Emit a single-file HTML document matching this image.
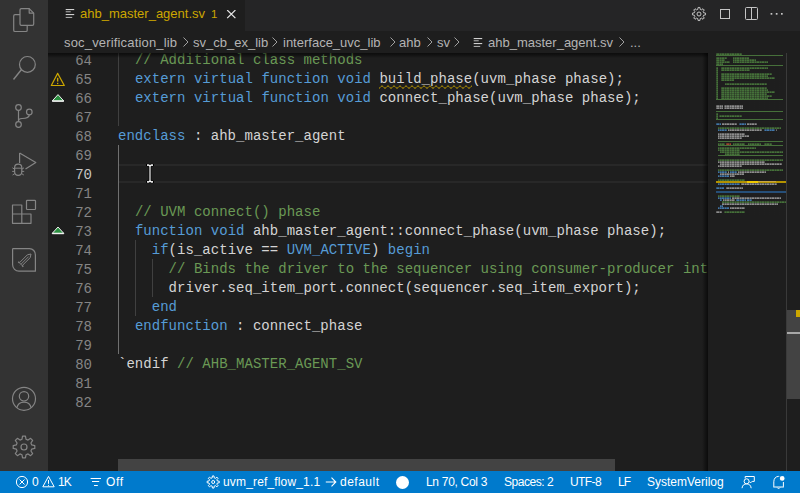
<!DOCTYPE html>
<html><head><meta charset="utf-8">
<style>
*{margin:0;padding:0;box-sizing:border-box}
html,body{width:800px;height:493px;overflow:hidden;background:#1e1e1e}
body{position:relative;font-family:"Liberation Sans",sans-serif}
.abs{position:absolute}
#act{left:0;top:0;width:48px;height:471px;background:#333333}
#tabs{left:48px;top:0;width:752px;height:31px;background:#252526}
#tab{left:48px;top:0;width:197px;height:31px;background:#1e1e1e}
#crumbs{left:48px;top:31px;width:752px;height:22px;background:#1e1e1e}
#editor{left:48px;top:53px;width:660px;height:418px;background:#1e1e1e;overflow:hidden}
#status{left:0;top:471px;width:800px;height:22px;background:#007acc;color:#fff;font-size:12px}
.ui{font-family:"Liberation Sans",sans-serif;white-space:pre}
.code{font-family:"Liberation Mono",monospace;font-size:14px;white-space:pre;line-height:19px;color:#d4d4d4;letter-spacing:0.03px}
.ln{font-family:"Liberation Mono",monospace;font-size:14px;line-height:19px;color:#858585;text-align:right;width:44px;white-space:pre}
.act{color:#c6c6c6}.k{color:#569cd6}.c{color:#6a9955}
.cr{color:#b4b4b4;font-size:13px;top:35px;line-height:16px}
.st{top:474px;line-height:16px;font-size:12px;color:#fff}
</style></head><body>
<div id="act" class="abs"></div>
<svg class="abs" style="left:0;top:0" width="48" height="471" viewBox="0 0 48 471">
<g fill="none" stroke="#858585" stroke-width="1.2" stroke-linejoin="round">
<!-- explorer -->
<path d="M20 14.6 H15 Q13.7 14.6 13.7 15.9 V30.2 Q13.7 31.5 15 31.5 H26 Q27.2 31.5 27.2 30.2 V25.4"/>
<path d="M21.3 8.6 H29.2 L33.7 13.1 V24 Q33.7 25.3 32.4 25.3 H21.3 Q20 25.3 20 24 V9.9 Q20 8.6 21.3 8.6 Z"/>
<path d="M29.2 8.6 V13.1 H33.7"/>
<!-- search -->
<circle cx="27.4" cy="64.4" r="7.9"/>
<path d="M21.5 69.5 L13.5 79.5" stroke-width="1.4"/>
<!-- source control -->
<circle cx="18.5" cy="107.5" r="2.8"/>
<circle cx="18.5" cy="124.5" r="2.8"/>
<circle cx="29.3" cy="112" r="2.8"/>
<path d="M18.5 110.3 V121.7"/>
<path d="M29.3 114.8 C29.3 118 26 118.5 22 118.5 C19.5 118.5 18.5 119.5 18.5 121"/>
<!-- run & debug -->
<path d="M19.6 153 L35.8 162.5 L25.5 169"/>
<path d="M19.6 153 V163"/>
<path d="M14.6 167.8 C14.6 165.5 16.2 164.2 18.2 164.2 C20.2 164.2 21.8 165.5 21.8 167.8 V171.6 C21.8 173.9 20.2 175.4 18.2 175.4 C16.2 175.4 14.6 173.9 14.6 171.6 Z"/>
<path d="M14.6 168.2 H21.8 M14.6 169.2 L12.4 167.8 M14.6 171.4 H12.2 M14.8 173.6 L12.6 175 M21.8 169.2 L24 167.8 M21.8 171.4 H24.2 M21.6 173.6 L23.8 175" stroke-width="1"/>
<!-- extensions -->
<path d="M12.5 205 H21.8 V214 H31 V223.3 H12.5 Z M12.5 214 H21.8 V223.3"/>
<rect x="26.5" y="200.3" width="9" height="9.2" rx="0.8"/>
<!-- other -->
<path d="M13.2 248.6 H29.5 C33 248.6 35.4 251.5 35.4 255 V271.2 H19 C15.5 271.2 12.6 268.3 12.6 264.8 V249.2 C12.6 248.9 12.9 248.6 13.2 248.6 Z"/>
<path d="M31 254 L30.2 257.6 L22.2 265.6 L19.4 262.8 L27.4 254.8 Z" stroke-width="1"/>
<path d="M21 264.2 L28.6 256.6" stroke-width="0.9"/>
<path d="M19.4 262.8 L18.3 261.7 M22.2 265.6 L23.3 266.7 M19.5 265.5 L19.6 265.6" stroke-width="1.4"/>
<!-- account -->
<circle cx="24" cy="398.8" r="11.5"/>
<circle cx="24" cy="396.3" r="4.7"/>
<path d="M16.8 407.8 C17.8 403.8 20.6 402.2 24 402.2 C27.4 402.2 30.2 403.8 31.2 407.8"/>
<!-- gear -->
<path d="M21.95 439.27 L22.55 436.20 L25.45 436.20 L26.05 439.27 L28.02 440.08 L30.61 438.34 L32.66 440.39 L30.92 442.98 L31.73 444.95 L34.80 445.55 L34.80 448.45 L31.73 449.05 L30.92 451.02 L32.66 453.61 L30.61 455.66 L28.02 453.92 L26.05 454.73 L25.45 457.80 L22.55 457.80 L21.95 454.73 L19.98 453.92 L17.39 455.66 L15.34 453.61 L17.08 451.02 L16.27 449.05 L13.20 448.45 L13.20 445.55 L16.27 444.95 L17.08 442.98 L15.34 440.39 L17.39 438.34 L19.98 440.08 Z"/>
<circle cx="24" cy="447" r="3"/>
</g>
</svg>
<div id="tabs" class="abs"></div>
<div id="tab" class="abs"></div>
<svg class="abs" style="left:65px;top:8px" width="10" height="11" viewBox="0 0 10 11">
<rect x="0.7" y="1" width="8.5" height="1.1" fill="#d0d0d0"/>
<rect x="0.7" y="3.2" width="5" height="1.1" fill="#a8a8a8"/>
<rect x="0.7" y="6" width="8.5" height="1.1" fill="#d0d0d0"/>
<rect x="0.7" y="8.9" width="6.5" height="1.1" fill="#a8a8a8"/>
</svg>
<div class="abs ui" id="tabtxt" style="left:80px;top:6px;font-size:13px;line-height:16px;color:#cca700">ahb_master_agent.sv</div>
<div class="abs ui" id="tab1" style="left:211px;top:6px;font-size:11.5px;line-height:16px;color:#cca700">1</div>
<svg class="abs" style="left:226px;top:10px" width="11" height="9" viewBox="0 0 11 9">
<path d="M1.2 0.1 L9.4 8.1 M9.4 0.1 L1.2 8.1" stroke="#e6e6e6" stroke-width="1.25" fill="none"/>
</svg>
<!-- tab actions -->
<svg class="abs" style="left:691px;top:6px" width="16" height="16" viewBox="0 0 16 16">
<g fill="none" stroke="#c5c5c5" stroke-width="1">
<path d="M6.77 3.36 L7.12 1.46 L8.88 1.46 L9.23 3.36 L10.41 3.85 L12.00 2.75 L13.25 4.00 L12.15 5.59 L12.64 6.77 L14.54 7.12 L14.54 8.88 L12.64 9.23 L12.15 10.41 L13.25 12.00 L12.00 13.25 L10.41 12.15 L9.23 12.64 L8.88 14.54 L7.12 14.54 L6.77 12.64 L5.59 12.15 L4.00 13.25 L2.75 12.00 L3.85 10.41 L3.36 9.23 L1.46 8.88 L1.46 7.12 L3.36 6.77 L3.85 5.59 L2.75 4.00 L4.00 2.75 L5.59 3.85 Z"/>
<circle cx="8" cy="8" r="2"/>
</g></svg>
<svg class="abs" style="left:719px;top:8px" width="12" height="12" viewBox="0 0 12 12">
<rect x="1.5" y="1.5" width="9" height="9" fill="none" stroke="#c5c5c5" stroke-width="1"/>
</svg>
<svg class="abs" style="left:744px;top:6px" width="15" height="15" viewBox="0 0 15 15">
<rect x="1.5" y="1.5" width="12" height="12" rx="1" fill="none" stroke="#c5c5c5" stroke-width="1"/>
<path d="M7.5 1.5 V13.5" stroke="#c5c5c5" stroke-width="1"/>
</svg>
<svg class="abs" style="left:770px;top:12px" width="14" height="4" viewBox="0 0 14 4">
<rect x="0.6" y="1" width="1.7" height="1.7" fill="#c5c5c5"/>
<rect x="5.8" y="1" width="1.7" height="1.7" fill="#c5c5c5"/>
<rect x="11" y="1" width="1.7" height="1.7" fill="#c5c5c5"/>
</svg>
<div id="crumbs" class="abs"></div>
<div class="abs ui cr" style="left:64px;letter-spacing:0.17px">soc_verification_lib</div>
<svg class="abs chev" style="left:182px;top:36px" width="8" height="12" viewBox="0 0 8 12"><path d="M1.5 1.5 L6 6 L1.5 10.5" stroke="#a0a0a0" stroke-width="1" fill="none"/></svg>
<div class="abs ui cr" style="left:193px">sv_cb_ex_lib</div>
<svg class="abs chev" style="left:271px;top:36px" width="8" height="12" viewBox="0 0 8 12"><path d="M1.5 1.5 L6 6 L1.5 10.5" stroke="#a0a0a0" stroke-width="1" fill="none"/></svg>
<div class="abs ui cr" style="left:283px">interface_uvc_lib</div>
<svg class="abs chev" style="left:389px;top:36px" width="8" height="12" viewBox="0 0 8 12"><path d="M1.5 1.5 L6 6 L1.5 10.5" stroke="#a0a0a0" stroke-width="1" fill="none"/></svg>
<div class="abs ui cr" style="left:399px">ahb</div>
<svg class="abs chev" style="left:426px;top:36px" width="8" height="12" viewBox="0 0 8 12"><path d="M1.5 1.5 L6 6 L1.5 10.5" stroke="#a0a0a0" stroke-width="1" fill="none"/></svg>
<div class="abs ui cr" style="left:437px">sv</div>
<svg class="abs chev" style="left:453px;top:36px" width="8" height="12" viewBox="0 0 8 12"><path d="M1.5 1.5 L6 6 L1.5 10.5" stroke="#a0a0a0" stroke-width="1" fill="none"/></svg>
<svg class="abs" style="left:473px;top:37px" width="10" height="11" viewBox="0 0 10 11">
<rect x="0.7" y="1" width="8.5" height="1.1" fill="#d0d0d0"/>
<rect x="0.7" y="3.2" width="5" height="1.1" fill="#a8a8a8"/>
<rect x="0.7" y="6" width="8.5" height="1.1" fill="#d0d0d0"/>
<rect x="0.7" y="8.9" width="6.5" height="1.1" fill="#a8a8a8"/>
</svg>
<div class="abs ui cr" style="left:488px">ahb_master_agent.sv</div>
<svg class="abs chev" style="left:618px;top:36px" width="8" height="12" viewBox="0 0 8 12"><path d="M1.5 1.5 L6 6 L1.5 10.5" stroke="#a0a0a0" stroke-width="1" fill="none"/></svg>
<div class="abs ui cr" style="left:630px">...</div>
<div id="editor" class="abs">
<!-- current line 70 -->
<div class="abs" style="left:70px;top:111px;width:590px;height:19px;border-top:2px solid #282828;border-bottom:2px solid #282828"></div>
<!-- indent guides (editor-relative: body x - 48, y - 53) -->
<div class="abs" style="left:70px;top:0;width:1px;height:73px;background:#404040"></div>
<div class="abs" style="left:70px;top:92px;width:1px;height:209px;background:#707070"></div>
<div class="abs" style="left:87px;top:187px;width:1px;height:76px;background:#404040"></div>
<div class="abs" style="left:104px;top:206px;width:1px;height:38px;background:#404040"></div>

<div class="abs ln" style="top:-1px;left:0">64</div>
<div class="abs code" style="top:-2px;left:70px">  <span class="c">// Additional class methods</span></div>
<div class="abs ln" style="top:18px;left:0">65</div>
<div class="abs code" style="top:17px;left:70px">  <span class="k">extern</span> <span class="k">virtual</span> <span class="k">function</span> <span class="k">void</span> <span class="sq">build_phase</span>(uvm_phase phase);</div>
<div class="abs ln" style="top:37px;left:0">66</div>
<div class="abs code" style="top:36px;left:70px">  <span class="k">extern</span> <span class="k">virtual</span> <span class="k">function</span> <span class="k">void</span> connect_phase(uvm_phase phase);</div>
<div class="abs ln" style="top:56px;left:0">67</div>
<div class="abs ln" style="top:75px;left:0">68</div>
<div class="abs code" style="top:74px;left:70px"><span class="k">endclass</span> : ahb_master_agent</div>
<div class="abs ln" style="top:94px;left:0">69</div>
<div class="abs ln act" style="top:113px;left:0">70</div>
<div class="abs ln" style="top:132px;left:0">71</div>
<div class="abs ln" style="top:151px;left:0">72</div>
<div class="abs code" style="top:150px;left:70px">  <span class="c">// UVM connect() phase</span></div>
<div class="abs ln" style="top:170px;left:0">73</div>
<div class="abs code" style="top:169px;left:70px">  <span class="k">function</span> <span class="k">void</span> ahb_master_agent::connect_phase(uvm_phase phase);</div>
<div class="abs ln" style="top:189px;left:0">74</div>
<div class="abs code" style="top:188px;left:70px">    <span class="k">if</span>(is_active == <span class="k">UVM_ACTIVE</span>) <span class="k">begin</span></div>
<div class="abs ln" style="top:208px;left:0">75</div>
<div class="abs code" style="top:207px;left:70px">      <span class="c">// Binds the driver to the sequencer using consumer-producer interface</span></div>
<div class="abs ln" style="top:227px;left:0">76</div>
<div class="abs code" style="top:226px;left:70px">      driver.seq_item_port.connect(sequencer.seq_item_export);</div>
<div class="abs ln" style="top:246px;left:0">77</div>
<div class="abs code" style="top:245px;left:70px">    <span class="k">end</span></div>
<div class="abs ln" style="top:265px;left:0">78</div>
<div class="abs code" style="top:264px;left:70px">  <span class="k">endfunction</span> : connect_phase</div>
<div class="abs ln" style="top:284px;left:0">79</div>
<div class="abs ln" style="top:303px;left:0">80</div>
<div class="abs code" style="top:302px;left:70px">`endif <span class="c">// AHB_MASTER_AGENT_SV</span></div>
<div class="abs ln" style="top:322px;left:0">81</div>
<div class="abs ln" style="top:341px;left:0">82</div>
</div>
<div id="status" class="abs"></div>
<svg class="abs" style="left:15px;top:475px" width="14" height="14" viewBox="0 0 14 14">
<g fill="none" stroke="#fff" stroke-width="1"><circle cx="7" cy="7" r="5.6"/><path d="M4.5 4.5 L9.5 9.5 M9.5 4.5 L4.5 9.5"/></g></svg>
<div class="abs ui st" style="left:32px">0</div>
<svg class="abs" style="left:41px;top:475px" width="15" height="14" viewBox="0 0 15 14">
<g fill="none" stroke="#fff" stroke-width="1" stroke-linejoin="round"><path d="M7.5 1.4 L13.2 11.8 H1.8 Z"/><path d="M7.5 5 V8.8 M7.5 9.9 V10.8"/></g></svg>
<div class="abs ui st" style="left:58px;letter-spacing:-1px">1K</div>
<svg class="abs" style="left:89px;top:476px" width="13" height="13" viewBox="0 0 13 13">
<g stroke="#fff" stroke-width="1"><path d="M1.6 2.5 H12 M3 5.5 H10.2 M5 9.5 H8.8"/></g></svg>
<div class="abs ui st" style="left:106px;letter-spacing:0.6px">Off</div>
<svg class="abs" style="left:206px;top:475px" width="14" height="14" viewBox="0 0 14 14">
<g fill="none" stroke="#fff" stroke-width="1">
<path d="M6.20 2.82 L6.39 0.95 L8.01 0.95 L8.20 2.82 L9.45 3.33 L10.90 2.15 L12.05 3.30 L10.87 4.75 L11.38 6.00 L13.25 6.19 L13.25 7.81 L11.38 8.00 L10.87 9.25 L12.05 10.70 L10.90 11.85 L9.45 10.67 L8.20 11.18 L8.01 13.05 L6.39 13.05 L6.20 11.18 L4.95 10.67 L3.50 11.85 L2.35 10.70 L3.53 9.25 L3.02 8.00 L1.15 7.81 L1.15 6.19 L3.02 6.00 L3.53 4.75 L2.35 3.30 L3.50 2.15 L4.95 3.33 Z"/>
<circle cx="7.2" cy="7" r="1.5"/></g></svg>
<div class="abs ui st" style="left:223px;letter-spacing:0.16px">uvm_ref_flow_1.1</div>
<svg class="abs" style="left:325px;top:476px" width="12" height="12" viewBox="0 0 12 12"><path d="M0.8 6 H10.8 M6.5 1.7 L10.8 6 L6.5 10.3" fill="none" stroke="#fff" stroke-width="1.1"/></svg>
<div class="abs ui st" style="left:340px;letter-spacing:0.5px">default</div>
<div class="abs" style="left:396px;top:476px;width:13px;height:13px;border-radius:50%;background:#fff"></div>
<div class="abs ui st" style="left:426px;letter-spacing:-0.3px">Ln 70, Col 3</div>
<div class="abs ui st" style="left:504px;letter-spacing:-0.45px">Spaces: 2</div>
<div class="abs ui st" style="left:570px;letter-spacing:-0.6px">UTF-8</div>
<div class="abs ui st" style="left:618px;letter-spacing:-1px">LF</div>
<div class="abs ui st" style="left:647px">SystemVerilog</div>
<svg class="abs" style="left:735px;top:471px" width="60" height="22" viewBox="0 0 60 22">
<g fill="none" stroke="#fff" stroke-width="1">
<circle cx="11.6" cy="10.3" r="2.5"/>
<path d="M7 17.2 C7.4 14 9.3 12.9 11.6 12.9 C13.9 12.9 15.8 14 16.2 17.2"/>
<path d="M10.2 7.4 V5.5 H19.3 V10.4 H17.2"/>
<path d="M14.4 10.6 L15.6 11.9 L17.1 10.3"/>
<path d="M38.8 15.8 V10.8 C38.8 7.6 40.7 5.4 43.6 5.4 C46.5 5.4 48.4 7.6 48.4 10.8 V15.8 M38.3 16 H48.9"/>
<path d="M42.2 16.6 C42.6 17.7 44.6 17.7 45 16.6"/>
</g>
<circle cx="47.2" cy="7.4" r="3" fill="#fff" stroke="#007acc" stroke-width="1.2"/>
</svg>
<!-- minimap -->
<div id="mm">
<svg class="abs" style="left:0;top:0" width="800" height="471" viewBox="0 0 800 471">
<rect x="716" y="53" width="26" height="2" fill="#4a7a3c"/>
<rect x="716" y="57" width="11" height="2" fill="#4a7a3c"/>
<rect x="733" y="57" width="16" height="2" fill="#4a7a3c"/>
<rect x="716" y="59" width="9" height="2" fill="#4a7a3c"/>
<rect x="733" y="59" width="23" height="2" fill="#4a7a3c"/>
<rect x="716" y="61" width="14" height="2" fill="#4a7a3c"/>
<rect x="733" y="61" width="35" height="2" fill="#4a7a3c"/>
<rect x="716" y="63" width="7" height="2" fill="#4a7a3c"/>
<rect x="716" y="67" width="2" height="2" fill="#4a7a3c"/>
<rect x="721" y="67" width="47" height="2" fill="#4a7a3c"/>
<rect x="716" y="69" width="2" height="2" fill="#4a7a3c"/>
<rect x="721" y="69" width="29" height="2" fill="#4a7a3c"/>
<rect x="716" y="71" width="2" height="2" fill="#4a7a3c"/>
<rect x="716" y="73" width="2" height="2" fill="#4a7a3c"/>
<rect x="721" y="73" width="51" height="2" fill="#4a7a3c"/>
<rect x="716" y="75" width="2" height="2" fill="#4a7a3c"/>
<rect x="721" y="75" width="47" height="2" fill="#4a7a3c"/>
<rect x="716" y="77" width="2" height="2" fill="#4a7a3c"/>
<rect x="721" y="77" width="54" height="2" fill="#4a7a3c"/>
<rect x="716" y="79" width="2" height="2" fill="#4a7a3c"/>
<rect x="721" y="79" width="13" height="2" fill="#4a7a3c"/>
<rect x="716" y="81" width="2" height="2" fill="#4a7a3c"/>
<rect x="716" y="83" width="2" height="2" fill="#4a7a3c"/>
<rect x="725" y="83" width="42" height="2" fill="#4a7a3c"/>
<rect x="716" y="85" width="2" height="2" fill="#4a7a3c"/>
<rect x="716" y="87" width="2" height="2" fill="#4a7a3c"/>
<rect x="721" y="87" width="46" height="2" fill="#4a7a3c"/>
<rect x="716" y="89" width="2" height="2" fill="#4a7a3c"/>
<rect x="721" y="89" width="47" height="2" fill="#4a7a3c"/>
<rect x="716" y="91" width="2" height="2" fill="#4a7a3c"/>
<rect x="721" y="91" width="54" height="2" fill="#4a7a3c"/>
<rect x="716" y="93" width="2" height="2" fill="#4a7a3c"/>
<rect x="721" y="93" width="46" height="2" fill="#4a7a3c"/>
<rect x="716" y="95" width="2" height="2" fill="#4a7a3c"/>
<rect x="721" y="95" width="51" height="2" fill="#4a7a3c"/>
<rect x="716" y="97" width="2" height="2" fill="#4a7a3c"/>
<rect x="721" y="97" width="47" height="2" fill="#4a7a3c"/>
<rect x="716" y="105" width="7" height="2" fill="#9a9a9a"/>
<rect x="724" y="105" width="19" height="2" fill="#9a9a9a"/>
<rect x="716" y="107" width="7" height="2" fill="#9a9a9a"/>
<rect x="724" y="107" width="19" height="2" fill="#9a9a9a"/>
<rect x="716" y="113" width="2" height="2" fill="#4a7a3c"/>
<rect x="716" y="115" width="2" height="2" fill="#4a7a3c"/>
<rect x="719" y="115" width="23" height="2" fill="#4a7a3c"/>
<rect x="716" y="117" width="2" height="2" fill="#4a7a3c"/>
<rect x="716" y="123" width="5" height="2" fill="#4580b8"/>
<rect x="722" y="123" width="15" height="2" fill="#9a9a9a"/>
<rect x="739" y="123" width="7" height="2" fill="#4580b8"/>
<rect x="747" y="123" width="10" height="2" fill="#9a9a9a"/>
<rect x="718" y="127" width="63" height="2" fill="#4a7a3c"/>
<rect x="718" y="129" width="9" height="2" fill="#4580b8"/>
<rect x="728" y="129" width="34" height="2" fill="#9a9a9a"/>
<rect x="764" y="129" width="11" height="2" fill="#4580b8"/>
<rect x="776" y="129" width="1" height="2" fill="#9a9a9a"/>
<rect x="718" y="133" width="27" height="2" fill="#9a9a9a"/>
<rect x="718" y="135" width="31" height="2" fill="#9a9a9a"/>
<rect x="718" y="137" width="24" height="2" fill="#9a9a9a"/>
<rect x="718" y="143" width="7" height="2" fill="#4a7a3c"/>
<rect x="726" y="143" width="5" height="2" fill="#b04a30"/>
<rect x="733" y="143" width="12" height="2" fill="#4a7a3c"/>
<rect x="748" y="143" width="13" height="2" fill="#4a7a3c"/>
<rect x="764" y="143" width="8" height="2" fill="#4a7a3c"/>
<rect x="718" y="147" width="38" height="2" fill="#4a7a3c"/>
<rect x="718" y="149" width="22" height="2" fill="#4a7a3c"/>
<rect x="720" y="151" width="63" height="2" fill="#4a7a3c"/>
<rect x="725" y="153" width="15" height="2" fill="#4a7a3c"/>
<rect x="718" y="159" width="65" height="2" fill="#4a7a3c"/>
<rect x="718" y="161" width="47" height="2" fill="#9a9a9a"/>
<rect x="720" y="163" width="62" height="2" fill="#9a9a9a"/>
<rect x="718" y="165" width="24" height="2" fill="#9a9a9a"/>
<rect x="718" y="169" width="65" height="2" fill="#4a7a3c"/>
<rect x="718" y="171" width="9" height="2" fill="#4580b8"/>
<rect x="728" y="171" width="1" height="2" fill="#9a9a9a"/>
<rect x="730" y="171" width="7" height="2" fill="#4580b8"/>
<rect x="738" y="171" width="28" height="2" fill="#9a9a9a"/>
<rect x="720" y="173" width="24" height="2" fill="#9a9a9a"/>
<rect x="718" y="175" width="11" height="2" fill="#4580b8"/>
<rect x="730" y="175" width="5" height="2" fill="#9a9a9a"/>
<rect x="718" y="179" width="27" height="2" fill="#4a7a3c"/>
<rect x="718" y="183" width="22" height="2" fill="#4580b8"/>
<rect x="741" y="183" width="36" height="2" fill="#9a9a9a"/>
<rect x="716" y="187" width="8" height="2" fill="#4580b8"/>
<rect x="726" y="187" width="17" height="2" fill="#9a9a9a"/>
<rect x="718" y="195" width="22" height="2" fill="#4a7a3c"/>
<rect x="718" y="197" width="13" height="2" fill="#4580b8"/>
<rect x="732" y="197" width="49" height="2" fill="#9a9a9a"/>
<rect x="720" y="199" width="2" height="2" fill="#4580b8"/>
<rect x="723" y="199" width="12" height="2" fill="#9a9a9a"/>
<rect x="736" y="199" width="10" height="2" fill="#4580b8"/>
<rect x="747" y="199" width="5" height="2" fill="#4580b8"/>
<rect x="722" y="201" width="64" height="2" fill="#4a7a3c"/>
<rect x="722" y="203" width="56" height="2" fill="#9a9a9a"/>
<rect x="720" y="205" width="3" height="2" fill="#4580b8"/>
<rect x="718" y="207" width="11" height="2" fill="#4580b8"/>
<rect x="730" y="207" width="15" height="2" fill="#9a9a9a"/>
<rect x="716" y="211" width="6" height="2" fill="#9a9a9a"/>
<rect x="724" y="211" width="21" height="2" fill="#4a7a3c"/>
<rect x="718" y="181" width="22" height="1.5" fill="#3d6e9a"/>
<rect x="747" y="181" width="11" height="2" fill="#e8c000"/>
<rect x="758" y="181" width="18" height="1.5" fill="#b09a40"/>
<defs><pattern id="stp" width="5" height="2" patternUnits="userSpaceOnUse"><rect x="0" y="0" width="5" height="2" fill="#1e1e1e" fill-opacity="0.1"/><rect x="1" y="0" width="1" height="2" fill="#1e1e1e" fill-opacity="0.3"/><rect x="4" y="0" width="1" height="2" fill="#1e1e1e" fill-opacity="0.45"/><rect x="0" y="1" width="5" height="1" fill="#1e1e1e" fill-opacity="0.3"/></pattern></defs>
<rect x="716" y="53" width="70" height="162" fill="url(#stp)"/>
<rect x="716" y="55" width="67" height="1" fill="#46703a"/>
<rect x="716" y="65" width="67" height="1" fill="#46703a"/>
<rect x="716" y="99" width="67" height="1" fill="#46703a"/>
<rect x="716" y="111" width="67" height="1" fill="#46703a"/>
<rect x="716" y="119" width="67" height="1" fill="#46703a"/>
<rect x="718" y="141" width="65" height="1" fill="#46703a"/>
<rect x="718" y="145" width="65" height="1" fill="#46703a"/>
<rect x="718" y="155" width="65" height="1" fill="#46703a"/>
<rect x="716" y="181" width="70" height="2" fill="#b39200"/>
<rect x="747" y="181" width="11" height="2" fill="#f0c800"/>
<rect x="758" y="181" width="18" height="1" fill="#c9a640"/>
<rect x="716" y="191" width="70" height="2" fill="#264f78"/>
</svg>
</div>
<!-- scroll shadows -->
<div class="abs" style="left:48px;top:53px;width:660px;height:5px;background:linear-gradient(#00000090,#00000070 35%,#00000000)"></div>
<div class="abs" style="left:702px;top:53px;width:6px;height:418px;background:linear-gradient(90deg,#00000000,#000000a0)"></div>
<!-- vertical scrollbar -->
<div class="abs" style="left:786px;top:53px;width:1px;height:418px;background:#3a3a3a"></div>
<div class="abs" style="left:787px;top:310px;width:13px;height:89px;background:#434343"></div>
<div class="abs" style="left:796px;top:310px;width:4px;height:7px;background:#cca700"></div>
<div class="abs" style="left:787px;top:332px;width:13px;height:2px;background:#a8a8a8"></div>
<!-- horizontal scrollbar -->
<div class="abs" style="left:118px;top:459px;width:497px;height:12px;background:#434343"></div>
<!-- gutter icons -->
<svg class="abs" style="left:48px;top:68px" width="20" height="40" viewBox="0 0 20 40">
<path d="M9.65 5.4 L16.3 17.5 H3.3 Z" fill="none" stroke="#cca700" stroke-width="1.2" stroke-linejoin="round"/>
<path d="M9.65 9.8 V13.6" stroke="#cca700" stroke-width="1.4"/>
<rect x="9" y="14.8" width="1.3" height="1.3" fill="#cca700"/>
<path d="M10 26.6 L15.8 33 H4.2 Z" fill="#2a9040" stroke="#f0f0f0" stroke-width="1" stroke-linejoin="round"/>
<rect x="4.2" y="32.4" width="11.6" height="1.4" fill="#f0f0f0"/>
</svg>
<svg class="abs" style="left:48px;top:220px" width="20" height="20" viewBox="0 0 20 20">
<path d="M10 7 L15.8 13.4 H4.2 Z" fill="#2a9040" stroke="#f0f0f0" stroke-width="1" stroke-linejoin="round"/>
<rect x="4.2" y="12.8" width="11.6" height="1.4" fill="#f0f0f0"/>
</svg>
<!-- squiggly -->
<svg class="abs" style="left:379px;top:85px" width="93" height="4" viewBox="0 0 93 4">
<polyline points="0.0 3.20 0.5 3.05 1.0 2.65 1.5 2.10 2.0 1.55 2.5 1.15 3.0 1.00 3.5 1.15 4.0 1.55 4.5 2.10 5.0 2.65 5.5 3.05 6.0 3.20 6.5 3.05 7.0 2.65 7.5 2.10 8.0 1.55 8.5 1.15 9.0 1.00 9.5 1.15 10.0 1.55 10.5 2.10 11.0 2.65 11.5 3.05 12.0 3.20 12.5 3.05 13.0 2.65 13.5 2.10 14.0 1.55 14.5 1.15 15.0 1.00 15.5 1.15 16.0 1.55 16.5 2.10 17.0 2.65 17.5 3.05 18.0 3.20 18.5 3.05 19.0 2.65 19.5 2.10 20.0 1.55 20.5 1.15 21.0 1.00 21.5 1.15 22.0 1.55 22.5 2.10 23.0 2.65 23.5 3.05 24.0 3.20 24.5 3.05 25.0 2.65 25.5 2.10 26.0 1.55 26.5 1.15 27.0 1.00 27.5 1.15 28.0 1.55 28.5 2.10 29.0 2.65 29.5 3.05 30.0 3.20 30.5 3.05 31.0 2.65 31.5 2.10 32.0 1.55 32.5 1.15 33.0 1.00 33.5 1.15 34.0 1.55 34.5 2.10 35.0 2.65 35.5 3.05 36.0 3.20 36.5 3.05 37.0 2.65 37.5 2.10 38.0 1.55 38.5 1.15 39.0 1.00 39.5 1.15 40.0 1.55 40.5 2.10 41.0 2.65 41.5 3.05 42.0 3.20 42.5 3.05 43.0 2.65 43.5 2.10 44.0 1.55 44.5 1.15 45.0 1.00 45.5 1.15 46.0 1.55 46.5 2.10 47.0 2.65 47.5 3.05 48.0 3.20 48.5 3.05 49.0 2.65 49.5 2.10 50.0 1.55 50.5 1.15 51.0 1.00 51.5 1.15 52.0 1.55 52.5 2.10 53.0 2.65 53.5 3.05 54.0 3.20 54.5 3.05 55.0 2.65 55.5 2.10 56.0 1.55 56.5 1.15 57.0 1.00 57.5 1.15 58.0 1.55 58.5 2.10 59.0 2.65 59.5 3.05 60.0 3.20 60.5 3.05 61.0 2.65 61.5 2.10 62.0 1.55 62.5 1.15 63.0 1.00 63.5 1.15 64.0 1.55 64.5 2.10 65.0 2.65 65.5 3.05 66.0 3.20 66.5 3.05 67.0 2.65 67.5 2.10 68.0 1.55 68.5 1.15 69.0 1.00 69.5 1.15 70.0 1.55 70.5 2.10 71.0 2.65 71.5 3.05 72.0 3.20 72.5 3.05 73.0 2.65 73.5 2.10 74.0 1.55 74.5 1.15 75.0 1.00 75.5 1.15 76.0 1.55 76.5 2.10 77.0 2.65 77.5 3.05 78.0 3.20 78.5 3.05 79.0 2.65 79.5 2.10 80.0 1.55 80.5 1.15 81.0 1.00 81.5 1.15 82.0 1.55 82.5 2.10 83.0 2.65 83.5 3.05 84.0 3.20 84.5 3.05 85.0 2.65 85.5 2.10 86.0 1.55 86.5 1.15 87.0 1.00 87.5 1.15 88.0 1.55 88.5 2.10 89.0 2.65 89.5 3.05 90.0 3.20 90.5 3.05 91.0 2.65 91.5 2.10 92.0 1.55 92.5 1.15 93.0 1.00" fill="none" stroke="#cca700" stroke-width="1"/>
</svg>
<!-- mouse I-beam -->
<svg class="abs" style="left:145px;top:162px" width="10" height="23" viewBox="0 0 10 23">
<path d="M1.5 1.8 H4 L5 2.6 L6 1.8 H8.5 V4.4 H6.1 V18.6 H8.5 V21.2 H6 L5 20.4 L4 21.2 H1.5 V18.6 H3.9 V4.4 H1.5 Z" fill="#f6f6f6" stroke="#000" stroke-width="1"/>
</svg>
</body></html>
